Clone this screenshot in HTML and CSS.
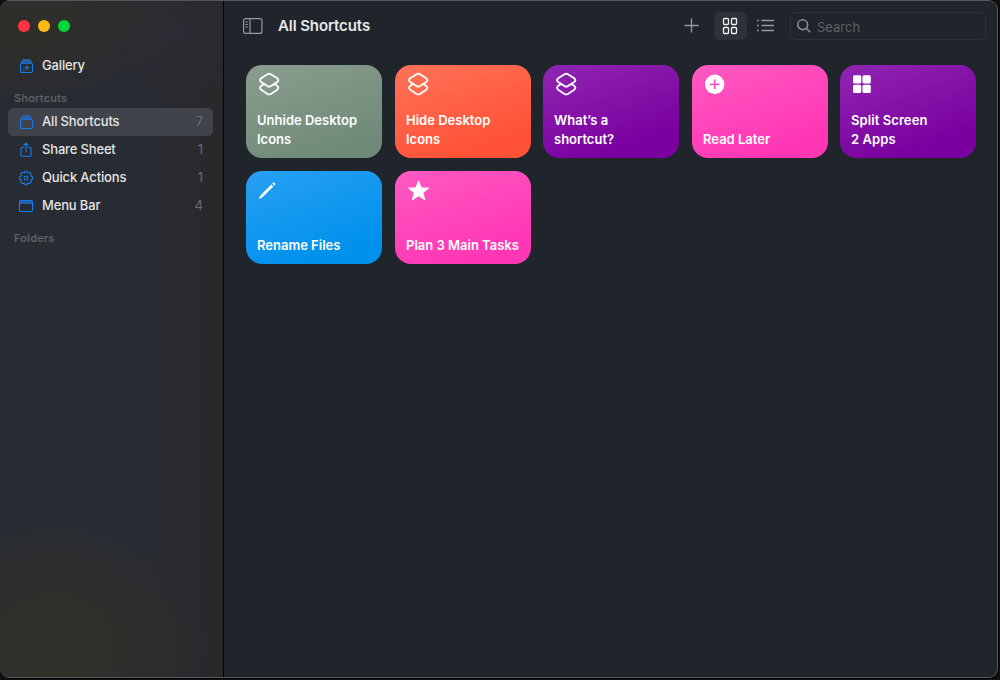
FILE: index.html
```html
<!DOCTYPE html>
<html lang="en">
<head>
<meta charset="utf-8">
<title>Shortcuts</title>
<link rel="stylesheet" href="styles.css">
</head>
<body>
<svg class="defs" width="0" height="0">
  <symbol id="layers" viewBox="0 0 22 24">
    <path d="M9.500 2.200Q11.200 1.300 12.900 2.200L19.200 6.300Q21.600 8.200 19.200 10L12.900 14.100Q11.200 15 9.500 14.100L3.200 10Q.8 8.200 3.200 6.300Z"/>
    <path d="M4.600 12.700L3.200 13.900Q.8 15.900 3.200 17.700L9.500 22Q11.200 22.900 12.900 22L19.200 17.700Q21.600 15.900 19.200 13.900L17.800 12.700Q17 12.200 16 12.500"/>
    <path d="M4.600 12.700Q5.400 12.200 6.400 12.500"/>
  </symbol>
</svg>
<div class="window">
  <aside class="sidebar">
    <div class="lights"><i class="light red"></i><i class="light yellow"></i><i class="light green"></i></div>
    <nav class="nav">
      <a class="item gallery">
        <svg class="icon" viewBox="0 0 16 16"><path class="fill" d="M4.500 1h8v1.500h1.200v2.500H3V2.500h1.500z"/><rect x="2.500" y="5.200" width="12" height="9.300" rx="1.200"/><path class="spark" d="M9 6.500L9.700 9L12.200 9.700L9.700 10.400L9 12.900L8.300 10.400L5.800 9.700L8.300 9Z"/><path class="spark" d="M5.900 10.700L6.300 11.800L7.400 12.200L6.300 12.600L5.900 13.600L5.500 12.600L4.500 12.200L5.500 11.800Z"/></svg>
        <span class="label">Gallery</span>
      </a>
      <h2 class="heading">Shortcuts</h2>
      <a class="item selected">
        <svg class="icon" viewBox="0 0 16 16"><path class="fill" d="M4.500 1h8v1.500h1.200v2.500H3V2.500h1.500z"/><rect x="2.500" y="5.200" width="12" height="9.300" rx="1.200"/></svg>
        <span class="label">All Shortcuts</span><span class="count">7</span>
      </a>
      <a class="item">
        <svg class="icon" viewBox="0 0 16 16"><path d="M6 5.500H4Q3 5.500 3 6.500V13Q3 14.300 4.300 14.300H11.700Q13 14.300 13 13V6.500Q13 5.500 12 5.500H10M8 10V1M5.500 3.500L8 1L10.500 3.500"/></svg>
        <span class="label">Share Sheet</span><span class="count">1</span>
      </a>
      <a class="item">
        <svg class="icon" viewBox="0 0 16 16"><path d="M6.800 1.400Q8 .9 9.200 1.400L9.700 3L11.300 2.300Q12.600 2.600 13.100 4L12.600 5.900L14.300 6.600Q15 8 14.300 9.300L12.700 10L13.200 11.800Q12.600 13.300 11.200 13.600L9.800 13L9.200 14.600Q8 15.100 6.800 14.600L6.200 13L4.800 13.600Q3.300 13.300 2.800 11.800L3.300 10L1.700 9.300Q1 8 1.700 6.600L3.400 5.900L2.900 4Q3.400 2.600 4.700 2.300L6.300 3Z"/><circle cx="8" cy="8" r="1.900"/></svg>
        <span class="label">Quick Actions</span><span class="count">1</span>
      </a>
      <a class="item">
        <svg class="icon" viewBox="0 0 16 16"><path class="fill" d="M2 3h12v3H2z"/><rect x="1.500" y="2.500" width="13" height="11" rx="1.200"/></svg>
        <span class="label">Menu Bar</span><span class="count">4</span>
      </a>
      <h2 class="heading">Folders</h2>
    </nav>
  </aside>
  <main class="main">
    <header class="toolbar">
      <svg class="panel-icon" viewBox="0 0 20 16"><rect x=".6" y=".6" width="18.300" height="14.800" rx="2"/><path d="M7 1v14M2.500 4h2.300M2.500 6.500h2.300M2.500 9h2.300"/></svg>
      <h1 class="title">All Shortcuts</h1>
      <svg class="plus" viewBox="0 0 16 16"><path d="M7.500 .5v14M.5 7.500h14"/></svg>
      <button class="grid-button" aria-label="Grid view"><svg viewBox="0 0 16 18"><rect x="1.500" y="1.500" width="5" height="6" rx=".9"/><rect x="9.500" y="1.500" width="5" height="6" rx=".9"/><rect x="1.500" y="10.500" width="5" height="6" rx=".9"/><rect x="9.500" y="10.500" width="5" height="6" rx=".9"/></svg></button>
      <svg class="list-icon" viewBox="0 0 18 14"><path d="M4.500 1.500h12.500M4.500 6.500h12.500M4.500 11.500h12.500M0 1.500h1.800M0 6.500h1.800M0 11.500h1.800"/></svg>
      <div class="search"><svg viewBox="0 0 16 16"><circle cx="5.700" cy="6.700" r="4.900"/><path d="M9.200 10.300L13.200 14.200"/></svg><span>Search</span></div>
    </header>
    <section class="cards">
      <article class="card sage"><svg class="glyph line"><use href="#layers"/></svg><p>Unhide Desktop<br>Icons</p></article>
      <article class="card orange"><svg class="glyph line"><use href="#layers"/></svg><p class="nudge">Hide Desktop<br>Icons</p></article>
      <article class="card purple"><svg class="glyph line"><use href="#layers"/></svg><p>What’s a<br>shortcut?</p></article>
      <article class="card pink"><svg class="glyph" viewBox="0 0 22 24"><circle cx="10.700" cy="12.300" r="9.700"/><path class="cut" d="M10.700 8.200v8.200M6.600 12.300h8.200"/></svg><p class="nudge">Read Later</p></article>
      <article class="card purple"><svg class="glyph" viewBox="0 0 22 24"><rect x="1" y="3.300" width="8.300" height="8.300" rx="1.500"/><rect x="10.500" y="3.300" width="8.300" height="8.300" rx="1.500"/><rect x="1" y="12.800" width="8.300" height="8.300" rx="1.500"/><rect x="10.500" y="12.800" width="8.300" height="8.300" rx="1.500"/></svg><p class="wide">Split Screen<br>2 Apps</p></article>
      <article class="card blue"><svg class="glyph" viewBox="0 0 22 24"><path d="M13.400 6.500L15.300 8.400L4.500 19.200L1.500 20.900Q.8 21 1 20.200L2.600 17.200ZM14.300 5.600L15.100 4.800Q16 4.300 16.800 5.100Q17.500 5.900 17 6.700L16.200 7.500Z"/></svg><p>Rename Files</p></article>
      <article class="card pink"><svg class="glyph" viewBox="0 0 22 24"><path class="star" d="M11.600 3.300L14.100 9.800L21.200 10.200L15.700 14.500L17.600 21.400L11.600 17.500L5.600 21.400L7.500 14.500L2 10.200L9.100 9.800Z"/></svg><p class="nudge">Plan 3 Main Tasks</p></article>
    </section>
  </main>
</div>
</body>
</html>
```
FILE: styles.css
```css
* { box-sizing: border-box; }
body {
  margin: 0;
  width: 1000px;
  height: 680px;
  overflow: hidden;
  background: #101010;
  font-family: Inter, "Liberation Sans", sans-serif;
  color: #e4e5e6;
}
svg { display: block; fill: none; stroke: currentColor; flex: none; }
.defs { height: 0; }
.window {
  display: flex;
  width: 998px;
  height: 678px;
  border: solid #55585b;
  border-width: 1px 1px 1px 0;
  border-radius: 9px;
  overflow: hidden;
  background: #20242b;
  box-shadow: 0 0 0 1px #000;
}
.sidebar {
  width: 224px;
  flex: none;
  border-right: 1px solid #020304;
  background:
    radial-gradient(ellipse 150px 130px at 55px 645px, #302f2a 30%, rgba(48, 47, 42, 0)),
    radial-gradient(ellipse 150px 90px at 25px 15px, #302e2a 25%, rgba(48, 46, 42, 0)),
    radial-gradient(ellipse 100px 70px at 170px 30px, #2c2a32, rgba(44, 42, 50, 0)),
    linear-gradient(90deg, #272b32, #272b33 55%, #29292b);
}
.lights { display: flex; gap: 8px; padding: 19px 0 0 18px; }
.light { width: 12px; height: 12px; border-radius: 50%; }
.red { background: #ff3440; }
.yellow { background: #ffb916; }
.green { background: #00d73e; }
.nav { padding: 20px 10px 0 8px; }
.item {
  display: flex;
  align-items: center;
  height: 28px;
  padding: 0 10px;
  border-radius: 5px;
  font-size: 13px;
  font-weight: 500;
}
.selected { background: #404349; }
.icon { width: 16px; height: 16px; margin-right: 8px; color: #147cf0; stroke-width: 1.1; }
.icon .fill { fill: #2460a8; stroke: none; }
.icon .spark { fill: currentColor; stroke: none; }
.label { padding-bottom: 2px; letter-spacing: -.16px; }
.count { margin-left: auto; padding-bottom: 2px; color: #6a6d72; font-weight: 400; }
.heading {
  margin: 0;
  height: 28px;
  padding: 11px 0 0 6px;
  font-size: 11px;
  line-height: 14px;
  font-weight: 600;
  letter-spacing: .15px;
  color: #5d6065;
}
.main { flex: 1; min-width: 0; }
.toolbar { display: flex; align-items: center; height: 50px; padding: 0 11px 0 19px; color: #96989b; }
.panel-icon { width: 20px; height: 16px; stroke-width: 1.2; }
.title { margin: 0 auto 0 15px; padding-bottom: 2px; font-size: 15px; font-weight: 600; letter-spacing: -.1px; color: #e7e8e9; }
.plus { width: 16px; height: 16px; margin-right: 14px; stroke-width: 1.4; }
.grid-button {
  display: grid;
  place-items: center start;
  width: 33px;
  height: 28px;
  padding: 0 0 0 8px;
  border: 0;
  border-radius: 6px;
  background: #2d3138;
  color: #f1f1f2;
}
.grid-button svg { width: 16px; height: 18px; stroke-width: 1.3; }
.list-icon { width: 18px; height: 14px; margin: 0 15px 0 10px; stroke-width: 1.4; }
.search {
  display: flex;
  align-items: center;
  width: 196px;
  height: 28px;
  padding-left: 6px;
  border: 1px solid #2e3239;
  border-radius: 6px;
  font-size: 13px;
  color: #5d6065;
}
.search svg { width: 16px; height: 16px; margin-right: 4px; stroke-width: 1.6; color: #8a8c8f; }
.search span { padding-top: 2px; }
.cards {
  display: grid;
  grid-template-columns: repeat(5, 136px);
  grid-auto-rows: 93px;
  gap: 13px 12.500px;
  padding: 14px 0 0 22px;
}
.card {
  display: flex;
  flex-direction: column;
  justify-content: space-between;
  padding: 7px 11px 9px;
  border-radius: 16px;
  color: #fff;
}
.card p { margin: 0; font-size: 13px; line-height: 19px; font-weight: 600; white-space: nowrap; }
.card .nudge { padding-left: .5px; }
.card .wide { letter-spacing: .08px; }
.sage { background: linear-gradient(160deg, #8a9d8f, #6f8a78 85%); }
.orange { background: linear-gradient(160deg, #ff7359, #ff5237 80%); }
.purple { background: linear-gradient(160deg, #9026b2, #7a009f 80%); }
.pink { background: linear-gradient(160deg, #ff5ac2, #ff37b5 80%); }
.blue { background: linear-gradient(160deg, #29a0f4, #0091ec 80%); }
.glyph { width: 22px; height: 24px; margin-left: 1px; fill: #fff; stroke: none; }
.line { fill: none; stroke: #fff; stroke-width: 1.8; stroke-linejoin: round; stroke-linecap: round; }
.cut { stroke: #ff54bf; stroke-width: 1.8; stroke-linecap: round; }
.star { stroke: #fff; stroke-width: 1.2; stroke-linejoin: round; }
```
